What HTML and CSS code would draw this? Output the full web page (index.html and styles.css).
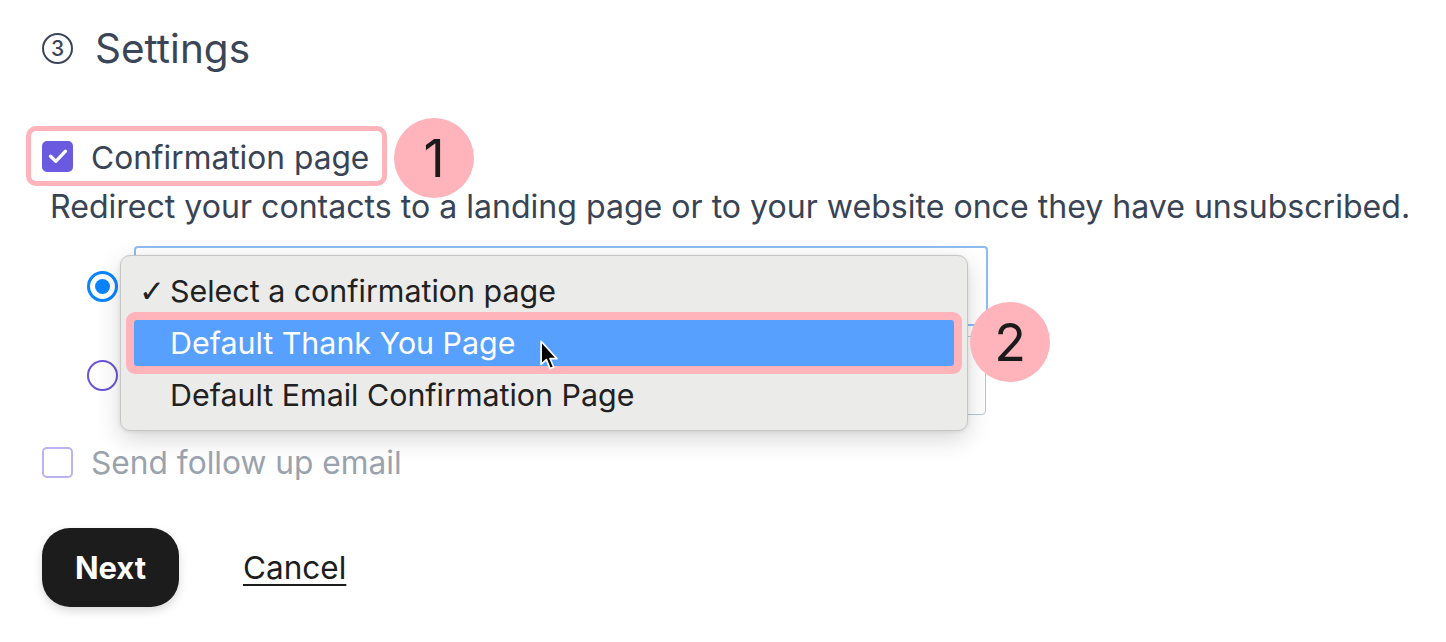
FILE: index.html
```html
<!DOCTYPE html>
<html lang="en">
<head>
<meta charset="utf-8">
<title>Settings</title>
<link rel="stylesheet" href="styles.css">
</head>
<body>
<div class="page">
  <h2 class="title"><span class="step">3</span><span class="title-text">Settings</span></h2>

  <div class="option-row">
    <label class="check-label hl">
      <span class="checkbox checked">
        <svg viewBox="0 0 20 20" width="22" height="22"><path d="M3.2 10.2l4.8 4.6L16.8 5.6" fill="none" stroke="#fff" stroke-width="3" stroke-linecap="round" stroke-linejoin="round"/></svg>
      </span>
      <span class="label-text">Confirmation page</span>
    </label>
    <span class="badge badge-1">1</span>
  </div>

  <p class="desc">Redirect your contacts to a landing page or to your website once they have unsubscribed.</p>

  <div class="radios">
    <div class="radio-row">
      <span class="radio checked"></span>
      <div class="select focused"></div>
    </div>
    <div class="radio-row">
      <span class="radio"></span>
      <div class="select"></div>
    </div>

    <div class="menu">
      <div class="menu-item selected"><span class="tick">✓</span>Select a confirmation page</div>
      <div class="menu-item active">Default Thank You Page</div>
      <div class="menu-item">Default Email Confirmation Page</div>
      <svg class="cursor" viewBox="0 0 20 30" width="21" height="32"><path d="M2 1 L2 23 L7 18.5 L10.5 27 L14 25.5 L10.5 17.5 L17 17.5 Z" fill="#000" stroke="#fff" stroke-width="1.6" stroke-linejoin="round"/></svg>
    </div>
    <span class="badge badge-2">2</span>
  </div>

  <label class="check-label disabled">
    <span class="checkbox"></span>
    <span class="label-text">Send follow up email</span>
  </label>

  <div class="actions">
    <button class="btn-next">Next</button>
    <a class="cancel" href="#">Cancel</a>
  </div>
</div>
</body>
</html>
```

FILE: styles.css
```css
* { box-sizing: border-box; }
html, body { margin: 0; background: #fff; }
body {
  font-family: Inter, "Noto Sans", "Liberation Sans", sans-serif;
  color: #384455;
}
.page {
  padding: 28px 0 0 42px;
  width: 1446px;
  height: 642px;
  overflow: hidden;
}
.title {
  margin: 0;
  display: flex;
  align-items: center;
  height: 40px;
  font-weight: 400;
  font-size: 40.5px;
  color: #3a4657;
}
.step {
  width: 31px;
  height: 31px;
  border: 2.5px solid #3a4657;
  border-radius: 50%;
  display: inline-flex;
  align-items: center;
  justify-content: center;
  font-size: 21px;
  font-weight: 500;
  margin-right: 22px;
}
.option-row {
  position: relative;
  margin-top: 63px;
  height: 50px;
}
.check-label {
  display: inline-flex;
  align-items: center;
  height: 31px;
  gap: 18px;
}
.check-label.hl {
  height: 50px;
  margin-left: -11px;
  padding: 0 13px 0 11px;
  border-radius: 5px;
  box-shadow: 0 0 0 5px #ffb3bb;
}
.checkbox {
  width: 31px;
  height: 31px;
  border-radius: 5px;
  border: 2px solid #b9b2f5;
  display: inline-flex;
  align-items: center;
  justify-content: center;
  flex: none;
}
.checkbox.checked {
  background: #6a5ae0;
  border-color: #6a5ae0;
}
.label-text {
  font-size: 31.7px;
  line-height: 36px;
  position: relative;
  top: 2px;
}
.badge {
  position: absolute;
  width: 80px;
  height: 80px;
  border-radius: 50%;
  background: #ffb3bb;
  color: #1a1a1a;
  font-size: 52px;
  display: flex;
  align-items: center;
  justify-content: center;
  font-weight: 400;
}
.badge-1 { left: 352px; top: -13px; }
.desc {
  margin: 8px 0 0 8px;
  font-size: 32.1px;
  line-height: 36px;
}
.radios {
  position: relative;
  margin-top: 21px;
  padding-left: 45px;
  display: flex;
  flex-direction: column;
  gap: 10px;
}
.radio-row {
  display: flex;
  align-items: center;
  gap: 16px;
}
.radio {
  width: 31px;
  height: 31px;
  border-radius: 50%;
  border: 2px solid #6b54d6;
  flex: none;
  display: flex;
  align-items: center;
  justify-content: center;
}
.radio.checked {
  border: 3px solid #0a84ff;
}
.radio.checked::after {
  content: "";
  width: 15px;
  height: 15px;
  border-radius: 50%;
  background: #0a84ff;
}
.select {
  width: 852px;
  height: 79px;
  border: 1.5px solid #b7c5d9;
  border-radius: 4px;
  background: #fff;
}
.select.focused {
  border: 2px solid #8dbcf3;
  height: 80px;
  width: 854px;
}
.menu {
  position: absolute;
  left: 78px;
  top: 9px;
  width: 848px;
  height: 176px;
  padding: 9px 13px 11px;
  background: #ebebea;
  border: 1px solid #c6c6c6;
  border-radius: 10px;
  box-shadow: 0 8px 24px rgba(0,0,0,0.16), 0 1px 4px rgba(0,0,0,0.08);
  font-family: Inter, "Noto Sans", "Liberation Sans", sans-serif;
  color: #212121;
}
.menu-item {
  position: relative;
  height: 52px;
  display: flex;
  align-items: center;
  padding-left: 36px;
  font-size: 30.4px;
}
.menu-item .tick {
  position: absolute;
  left: 5px;
  font-size: 31px;
  font-weight: 700;
  font-family: "DejaVu Sans", sans-serif;
}
.menu-item.active {
  height: 46px;
  margin: 3px 0;
  background: #57a0fe;
  color: #fff;
  border-radius: 3px;
  box-shadow: 0 0 0 8px #ffb3bb;
}
.cursor {
  position: absolute;
  left: 418px;
  top: 84px;
}
.badge-2 { left: 928px; top: 56px; }
.check-label.disabled {
  margin-top: 32px;
  color: #9ca3af;
}
.check-label.disabled .label-text { color: #9aa2ae; top: 0; }
.actions {
  display: flex;
  align-items: center;
  gap: 64px;
  margin-top: 46px;
}
.btn-next {
  width: 137px;
  height: 79px;
  border: none;
  border-radius: 28px;
  background: #1c1c1c;
  color: #fff;
  font-family: Inter, "Noto Sans", "Liberation Sans", sans-serif;
  font-weight: 700;
  font-size: 31px;
  box-shadow: 0 4px 10px rgba(0,0,0,0.15);
}
.cancel {
  color: #1c1c1c;
  font-size: 31.5px;
  text-decoration: underline;
  text-underline-offset: 5px;
  text-decoration-thickness: 2px;
}
```
